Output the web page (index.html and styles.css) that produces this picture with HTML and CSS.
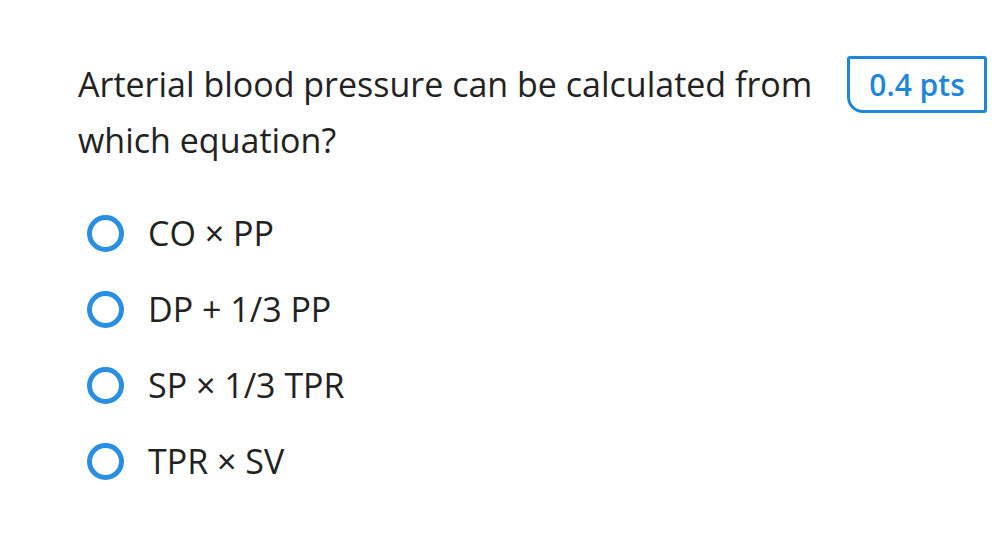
FILE: index.html
```html
<!DOCTYPE html>
<html>
<head>
<meta charset="utf-8">
<link rel="stylesheet" href="styles.css">
</head>
<body>
<div class="card">
  <div class="header">
    <div class="question">Arterial blood pressure can be calculated from which equation?</div>
    <div class="pts">0.4 pts</div>
  </div>
  <ul class="options">
    <li class="option"><span class="radio"></span><span class="label">CO × PP</span></li>
    <li class="option"><span class="radio"></span><span class="label">DP + 1/3 PP</span></li>
    <li class="option"><span class="radio"></span><span class="label">SP × 1/3 TPR</span></li>
    <li class="option"><span class="radio"></span><span class="label">TPR × SV</span></li>
  </ul>
</div>
</body>
</html>
```
FILE: styles.css
```css
html, body {
  margin: 0;
  padding: 0;
  background: #fff;
}
body {
  font-family: "Open Sans", "Noto Sans", sans-serif;
  color: #222;
}
.card {
  padding: 56px 5px 0 78px;
}
.header {
  display: flex;
  align-items: flex-start;
  justify-content: space-between;
  gap: 20px;
}
.question {
  font-size: 34px;
  line-height: 56px;
  margin-top: 0;
  width: 750px;
}
.pts {
  flex: none;
  box-sizing: border-box;
  width: 140px;
  height: 57px;
  border: 3.5px solid #1f87d9;
  border-radius: 3px 3px 3px 16px;
  color: #1f87d9;
  font-size: 30px;
  font-weight: 600;
  display: flex;
  align-items: center;
  justify-content: center;
}
.options {
  list-style: none;
  margin: 47px 0 0 9px;
  padding: 0;
  display: flex;
  flex-direction: column;
  gap: 39px;
}
.option {
  display: flex;
  align-items: center;
  gap: 24px;
  height: 37px;
}
.radio {
  box-sizing: border-box;
  width: 37px;
  height: 37px;
  border: 5px solid #2a8fe2;
  border-radius: 50%;
  flex: none;
}
.label {
  font-size: 34px;
  line-height: 37px;
}
```
